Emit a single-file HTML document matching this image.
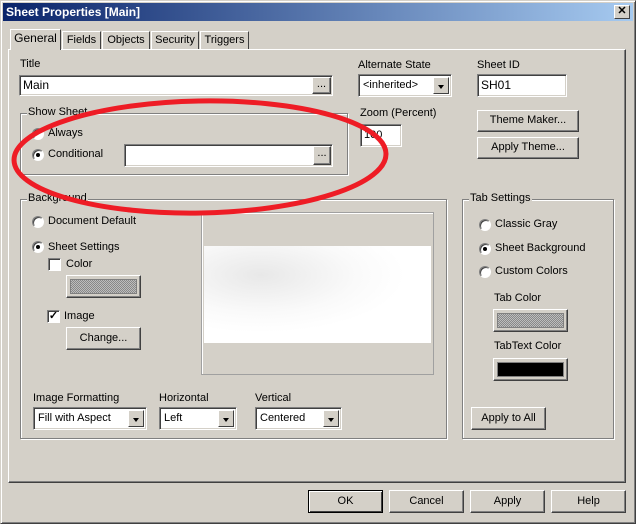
<!DOCTYPE html>
<html><head><meta charset="utf-8"><style>
*{box-sizing:border-box;margin:0;padding:0}
body{width:636px;height:524px;background:#d4d0c8;font:11px "Liberation Sans",sans-serif;color:#000;position:relative;overflow:hidden}
.a{position:absolute}
.win{left:0;top:0;width:636px;height:524px;border:1px solid;border-color:#d4d0c8 #404040 #404040 #d4d0c8;box-shadow:inset 1px 1px #fff,inset -1px -1px #808080}
.tb{left:3px;top:3px;width:630px;height:18px;background:linear-gradient(90deg,#0a246a,#a6caf0);color:#fff;font-weight:bold;font-size:12px;line-height:18px;padding-left:3px}
.x{left:614px;top:5px;width:16px;height:14px;background:#d4d0c8;border:1px solid;border-color:#fff #404040 #404040 #fff;color:#000;font-weight:bold;font-size:11px;line-height:11px;text-align:center}
.sunk{background:#fff;border:1px solid;border-color:#808080 #fff #fff #808080;box-shadow:inset 1px 1px #404040,inset -1px -1px #d4d0c8}
.btn{background:#d4d0c8;border:1px solid;border-color:#fff #404040 #404040 #fff;box-shadow:inset -1px -1px #808080;text-align:center;line-height:19px}
.grp{border:1px solid #808080;box-shadow:1px 1px #fff,inset 1px 1px #fff}
.lg{background:#d4d0c8;padding:0 1px;top:-8px;left:6px;position:absolute}
.rad{width:12px;height:12px;border-radius:50%;background:#fff;border:1px solid;border-color:#808080 #fff #fff #808080;box-shadow:inset 1px 1px #404040}
.dot::after{content:"";position:absolute;left:3px;top:3px;width:4px;height:4px;border-radius:50%;background:#000}
.chk{width:13px;height:13px;background:#fff;border:1px solid;border-color:#808080 #fff #fff #808080;box-shadow:inset 1px 1px #404040}
.dd{position:absolute;right:2px;top:2px;width:16px;bottom:2px;background:#d4d0c8;border:1px solid;border-color:#fff #404040 #404040 #fff}
.dd::after{content:"";position:absolute;left:4px;top:7px;border:3.5px solid transparent;border-top:4px solid #000;border-bottom:0}
.tab{top:31px;height:18px;border:1px solid;border-color:#fff #404040 transparent #fff;border-bottom:none;line-height:16px;text-align:center;background:#d4d0c8}
.chkr{background-color:#bdbdbd;background-image:linear-gradient(45deg,#888 25%,transparent 25%,transparent 75%,#888 75%),linear-gradient(45deg,#888 25%,transparent 25%,transparent 75%,#888 75%);background-size:2px 2px;background-position:0 0,1px 1px}
.ell{border-top:1px solid #000;line-height:14px}
</style></head><body>
<div class="a win"></div>
<div class="a tb">Sheet Properties [Main]</div>
<div class="a x">✕</div>
<div class="a" style="left:8px;top:49px;width:618px;height:434px;border:1px solid;border-color:#fff #404040 #404040 #fff;box-shadow:inset -1px -1px #808080"></div>
<div class="a tab" style="left:10px;top:29px;width:51px;height:21px;font-size:12px">General</div>
<div class="a tab" style="left:62px;width:39px">Fields</div>
<div class="a tab" style="left:102px;width:48px">Objects</div>
<div class="a tab" style="left:151px;width:48px">Security</div>
<div class="a tab" style="left:200px;width:49px">Triggers</div>

<div class="a" style="left:20px;top:58px">Title</div>
<div class="a sunk" style="left:19px;top:75px;width:314px;height:21px;padding:2px 3px;font-size:12px">Main</div>
<div class="a btn" style="left:312px;top:77px;width:19px;height:17px;line-height:12px">...</div>

<div class="a" style="left:358px;top:59px">Alternate State</div>
<div class="a sunk" style="left:358px;top:74px;width:94px;height:23px;padding:4px 4px">&lt;inherited&gt;<div class="dd"></div></div>
<div class="a" style="left:477px;top:59px">Sheet ID</div>
<div class="a sunk" style="left:477px;top:74px;width:90px;height:23px;padding:3px 3px;font-size:12px">SH01</div>

<div class="a grp" style="left:20px;top:113px;width:328px;height:62px"><span class="lg">Show Sheet</span></div>
<div class="a rad" style="left:32px;top:128px"></div><div class="a" style="left:48px;top:127px">Always</div>
<div class="a rad dot" style="left:32px;top:149px"></div><div class="a" style="left:48px;top:148px">Conditional</div>
<div class="a sunk" style="left:124px;top:144px;width:209px;height:23px"></div>
<div class="a btn" style="left:313px;top:146px;width:18px;height:19px;line-height:13px">...</div>

<div class="a" style="left:360px;top:107px">Zoom (Percent)</div>
<div class="a sunk" style="left:360px;top:124px;width:42px;height:23px;padding:4px 3px">100</div>
<div class="a btn" style="left:477px;top:110px;width:102px;height:22px">Theme Maker...</div>
<div class="a btn" style="left:477px;top:137px;width:102px;height:22px">Apply Theme...</div>

<div class="a grp" style="left:20px;top:199px;width:427px;height:240px"><span class="lg">Background</span></div>
<div class="a rad" style="left:32px;top:216px"></div><div class="a" style="left:48px;top:215px">Document Default</div>
<div class="a rad dot" style="left:32px;top:241px"></div><div class="a" style="left:48px;top:241px">Sheet Settings</div>
<div class="a chk" style="left:48px;top:258px"></div><div class="a" style="left:66px;top:258px">Color</div>
<div class="a btn" style="left:66px;top:275px;width:75px;height:23px;padding:3px"><div class="chkr" style="width:100%;height:100%;border:1px solid #808080"></div></div>
<div class="a chk" style="left:47px;top:310px;font-size:11px;line-height:10px;text-align:center;font-weight:bold">✓</div><div class="a" style="left:64px;top:310px">Image</div>
<div class="a btn" style="left:66px;top:327px;width:75px;height:23px;line-height:21px">Change...</div>
<div class="a" style="left:201px;top:212px;width:233px;height:163px;border:1px solid #a0a0a0;box-shadow:inset 1px 1px #fff"></div>
<div class="a" style="left:204px;top:246px;width:227px;height:97px;background:radial-gradient(ellipse at 25% 30%,#e8e8e8,#fafafa 40%,#fff 60%)"></div>

<div class="a" style="left:33px;top:392px">Image Formatting</div>
<div class="a sunk" style="left:33px;top:407px;width:114px;height:23px;padding:4px 4px">Fill with Aspect<div class="dd"></div></div>
<div class="a" style="left:159px;top:392px">Horizontal</div>
<div class="a sunk" style="left:159px;top:407px;width:78px;height:23px;padding:4px 4px">Left<div class="dd"></div></div>
<div class="a" style="left:255px;top:392px">Vertical</div>
<div class="a sunk" style="left:255px;top:407px;width:87px;height:23px;padding:4px 4px">Centered<div class="dd"></div></div>

<div class="a grp" style="left:462px;top:199px;width:152px;height:240px"><span class="lg">Tab Settings</span></div>
<div class="a rad" style="left:479px;top:219px"></div><div class="a" style="left:495px;top:218px">Classic Gray</div>
<div class="a rad dot" style="left:479px;top:243px"></div><div class="a" style="left:495px;top:242px">Sheet Background</div>
<div class="a rad" style="left:479px;top:266px"></div><div class="a" style="left:495px;top:265px">Custom Colors</div>
<div class="a" style="left:494px;top:292px">Tab Color</div>
<div class="a btn" style="left:493px;top:309px;width:75px;height:23px;padding:3px"><div class="chkr" style="width:100%;height:100%;border:1px solid #808080"></div></div>
<div class="a" style="left:494px;top:340px">TabText Color</div>
<div class="a btn" style="left:493px;top:358px;width:75px;height:23px;padding:3px"><div style="width:100%;height:100%;background:#000;border:1px solid #808080"></div></div>
<div class="a btn" style="left:471px;top:407px;width:75px;height:23px;line-height:21px">Apply to All</div>

<div class="a btn" style="left:308px;top:490px;width:75px;height:23px;line-height:21px;border:1px solid #000;box-shadow:inset 1px 1px #fff,inset -1px -1px #404040">OK</div>
<div class="a btn" style="left:389px;top:490px;width:75px;height:23px;line-height:21px">Cancel</div>
<div class="a btn" style="left:470px;top:490px;width:75px;height:23px;line-height:21px">Apply</div>
<div class="a btn" style="left:551px;top:490px;width:75px;height:23px;line-height:21px">Help</div>

<svg class="a" style="left:0;top:0" width="636" height="524"><ellipse cx="200" cy="157" rx="186" ry="56" fill="none" stroke="#ee1c25" stroke-width="5" transform="rotate(-1 200 157)"/></svg>
</body></html>
